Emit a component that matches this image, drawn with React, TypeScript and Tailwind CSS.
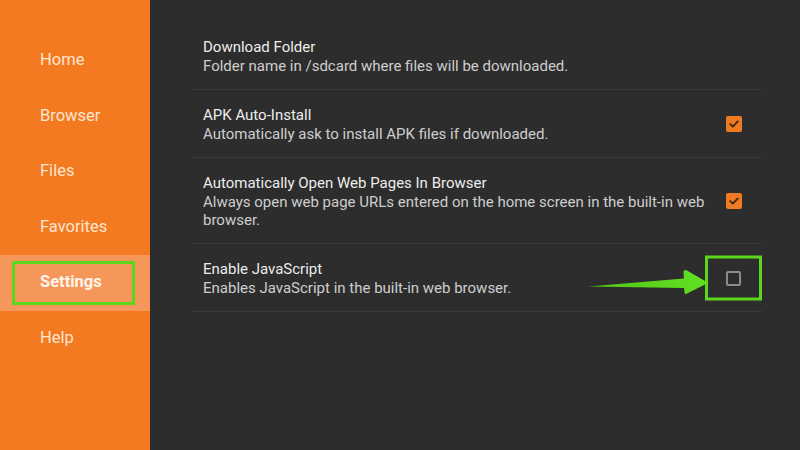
import React from "react";

const nav = ["Home", "Browser", "Files", "Favorites", "Settings", "Help"];

const rows = [
  {
    title: "Download Folder",
    desc: "Folder name in /sdcard where files will be downloaded.",
    check: null as null | boolean,
  },
  {
    title: "APK Auto-Install",
    desc: "Automatically ask to install APK files if downloaded.",
    check: true,
  },
  {
    title: "Automatically Open Web Pages In Browser",
    desc: "Always open web page URLs entered on the home screen in the built-in web browser.",
    check: true,
  },
  {
    title: "Enable JavaScript",
    desc: "Enables JavaScript in the built-in web browser.",
    check: false,
    marked: true,
  },
];

function Checkbox({ on }: { on: boolean }) {
  if (on) {
    return (
      <div className="w-[16px] h-[16px] rounded-[2px] bg-[#f07a24] flex items-center justify-center">
        <svg width="12" height="12" viewBox="0 0 12 12">
          <path d="M2.2 6.2 L4.8 8.6 L9.8 3.4" fill="none" stroke="#3b2614" strokeWidth="1.8" strokeLinecap="round" strokeLinejoin="round" />
        </svg>
      </div>
    );
  }
  return <div className="w-[15px] h-[15px] rounded-[2px] border-2 border-[#8c8c8c]" />;
}

export default function App() {
  return (
    <div
      className="relative flex w-[800px] h-[450px] overflow-hidden bg-[#2d2d2d]"
      style={{ fontFamily: "Roboto, 'Noto Sans', sans-serif" }}
    >
      <aside className="w-[150px] shrink-0 bg-[#f37a20] pt-[33px] flex flex-col">
        {nav.map((n) => {
          const active = n === "Settings";
          return (
            <div
              key={n}
              className={
                active
                  ? "h-[55.5px] bg-[#f5975a] flex items-center pl-[12px] pr-[15px] py-[6px]"
                  : "h-[55.5px] flex items-center pl-[40px]"
              }
            >
              {active ? (
                <div className="w-full h-full border-[3px] border-[#5cd61b] flex items-center pl-[25px] text-[16.5px] font-bold text-[#fff4ea]">
                  {n}
                </div>
              ) : (
                <span className="text-[16.5px] text-[#fde5cf]">{n}</span>
              )}
            </div>
          );
        })}
      </aside>

      <main className="flex-1 pt-[22px] pl-[42px] pr-[38px]">
        {rows.map((r) => (
          <div key={r.title} className="flex items-center border-b border-[#3b3b3b] pt-[15px] pb-[14px] pl-[11px]">
            <div className="flex-1 min-w-0 mr-[-10px]">
              <div className="text-[15px] leading-[20px] text-[#ececec]">{r.title}</div>
              <div className="text-[15px] leading-[18px] text-[#cdcdcd]">{r.desc}</div>
            </div>
            <div className="relative w-[57px] shrink-0 flex items-center justify-center">
              {r.check !== null && <Checkbox on={r.check} />}
              {r.marked && (
                <div className="absolute left-0 top-1/2 -translate-y-1/2 w-[57px] h-[45px] border-[3px] border-[#5cd61b]" />
              )}
            </div>
          </div>
        ))}
      </main>

      <svg className="absolute left-[580px] top-[262px]" width="130" height="40" viewBox="0 0 130 40">
        <defs>
          <linearGradient id="ag" x1="0" x2="1" y1="0" y2="0">
            <stop offset="0" stopColor="#4fc416" />
            <stop offset="1" stopColor="#62e021" />
          </linearGradient>
        </defs>
        <path
          d="M8 24.5 L104 16.5 L103.5 10 Q104 7 107 8.5 L125 19 Q127 21 125 22.5 L107 31.5 Q104.5 33 104.5 30 L104 26 Z"
          fill="url(#ag)"
        />
      </svg>
    </div>
  );
}
